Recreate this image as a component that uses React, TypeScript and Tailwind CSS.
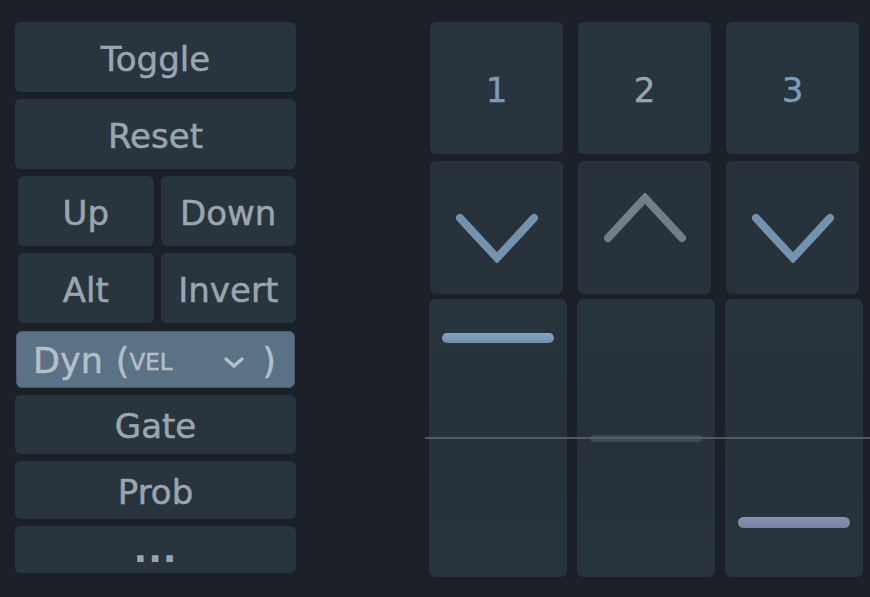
const font = { fontFamily: '"DejaVu Sans", "Liberation Sans", sans-serif' };

function Btn({ label, className = "" }: { label: string; className?: string }) {
  return (
    <div
      className={
        "flex items-center justify-center rounded-[6px] bg-[#29353e] pt-[4px] text-[34px] text-[#9aa5b0] [-webkit-text-stroke:0.5px] " +
        className
      }
    >
      {label}
    </div>
  );
}

function Chevron({ up, color }: { up?: boolean; color: string }) {
  return (
    <svg width="82" height="50" viewBox="0 0 82 50" fill="none">
      <path
        d={up ? "M4 45 L41 5 L78 45" : "M4 5 L41 45 L78 5"}
        stroke={color}
        strokeWidth="8"
        strokeLinecap="round"
        strokeLinejoin="miter"
      />
    </svg>
  );
}

function Lane({ children }: { children?: React.ReactNode }) {
  return (
    <div className="relative flex flex-col rounded-[7px] bg-gradient-to-b from-[#29353e] via-[#26313a] to-[#29353e]">
      {children}
    </div>
  );
}

export default function App() {
  return (
    <div
      className="relative flex h-[597px] w-[870px] overflow-hidden bg-[#1c2029]"
      style={font}
    >
      {/* left column of buttons */}
      <div className="ml-[15px] mt-[22px] flex w-[281px] flex-col">
        <Btn label="Toggle" className="h-[70px]" />
        <Btn label="Reset" className="mt-[7px] h-[70px]" />
        <div className="mt-[7px] flex h-[70px] gap-[7px] pl-[3px]">
          <Btn label="Up" className="flex-1" />
          <Btn label="Down" className="flex-1" />
        </div>
        <div className="mt-[7px] flex h-[70px] gap-[7px] pl-[3px]">
          <Btn label="Alt" className="flex-1" />
          <Btn label="Invert" className="flex-1" />
        </div>
        <div className="mx-px mt-[8px] flex h-[57px] items-center rounded-[6px] border border-[#4c5f70] bg-[#5b7186] pl-[16px] pr-[18px] pt-[4px] text-[#b4bfc9] [-webkit-text-stroke:0.5px]">
          <span className="text-[35px]">Dyn</span>
          <span className="ml-[13px] text-[35px]">(</span>
          <span className="translate-y-[1px] text-[23px]">VEL</span>
          <svg className="ml-auto mr-[17px] translate-y-[1px]" width="22" height="16" viewBox="0 0 22 16" fill="none">
            <path d="M3 4 L11 11 L19 4" stroke="#b4bfc9" strokeWidth="3.5" strokeLinecap="round" />
          </svg>
          <span className="text-[35px]">)</span>
        </div>
        <Btn label="Gate" className="mt-[7px] h-[59px]" />
        <Btn label="Prob" className="mt-[7px] h-[58px]" />
        <div className="mt-[7px] flex h-[47px] items-end justify-center rounded-[6px] bg-[#29353e] pb-[5px] text-[36px] font-bold leading-none text-[#9aa5b0]">
          <span className="tracking-[1px]">...</span>
        </div>
      </div>

      {/* right grid */}
      <div className="ml-[134px] mt-[22px] flex flex-col">
        <div className="grid grid-cols-[133px_133px_133px] grid-rows-[132px_133px] gap-x-[15px] gap-y-[7px]">
          <div className="flex items-center justify-center rounded-[6px] bg-[#29353e] pt-[4px] text-[34px] text-[#7b9bb8] [-webkit-text-stroke:0.4px]">1</div>
          <div className="flex items-center justify-center rounded-[6px] bg-[#29353e] pt-[4px] text-[34px] text-[#9aa5b0] [-webkit-text-stroke:0.4px]">2</div>
          <div className="flex items-center justify-center rounded-[6px] bg-[#29353e] pt-[4px] text-[34px] text-[#7b9bb8] [-webkit-text-stroke:0.4px]">3</div>
          <div className="flex items-start justify-center rounded-[6px] bg-[#27323b] pt-[52px]">
            <Chevron color="#7293ae" />
          </div>
          <div className="flex items-start justify-center rounded-[6px] bg-[#27323b] pt-[32px]">
            <Chevron up color="#737e87" />
          </div>
          <div className="flex items-start justify-center rounded-[6px] bg-[#27323b] pt-[52px]">
            <Chevron color="#7293ae" />
          </div>
        </div>
        <div className="-ml-px mt-[5px] grid h-[278px] grid-cols-[138px_138px_138px] gap-x-[10px]">
          <Lane>
            <div className="mx-[13px] mt-[34px] h-[10px] rounded-full bg-gradient-to-b from-[#86a5c0] to-[#6f8ea9]" />
          </Lane>
          <Lane>
            <div className="mx-[13px] mt-[136px] h-[7px] rounded-full bg-[#3b4956]" />
          </Lane>
          <Lane>
            <div className="mx-[13px] mt-[218px] h-[11px] rounded-full bg-gradient-to-b from-[#8a91b0] to-[#7a82a2]" />
          </Lane>
        </div>
      </div>

      {/* playhead line across the lanes */}
      <div className="absolute left-[425px] right-0 top-[437px] h-[2px] bg-[#5a6670]/80" />
    </div>
  );
}
